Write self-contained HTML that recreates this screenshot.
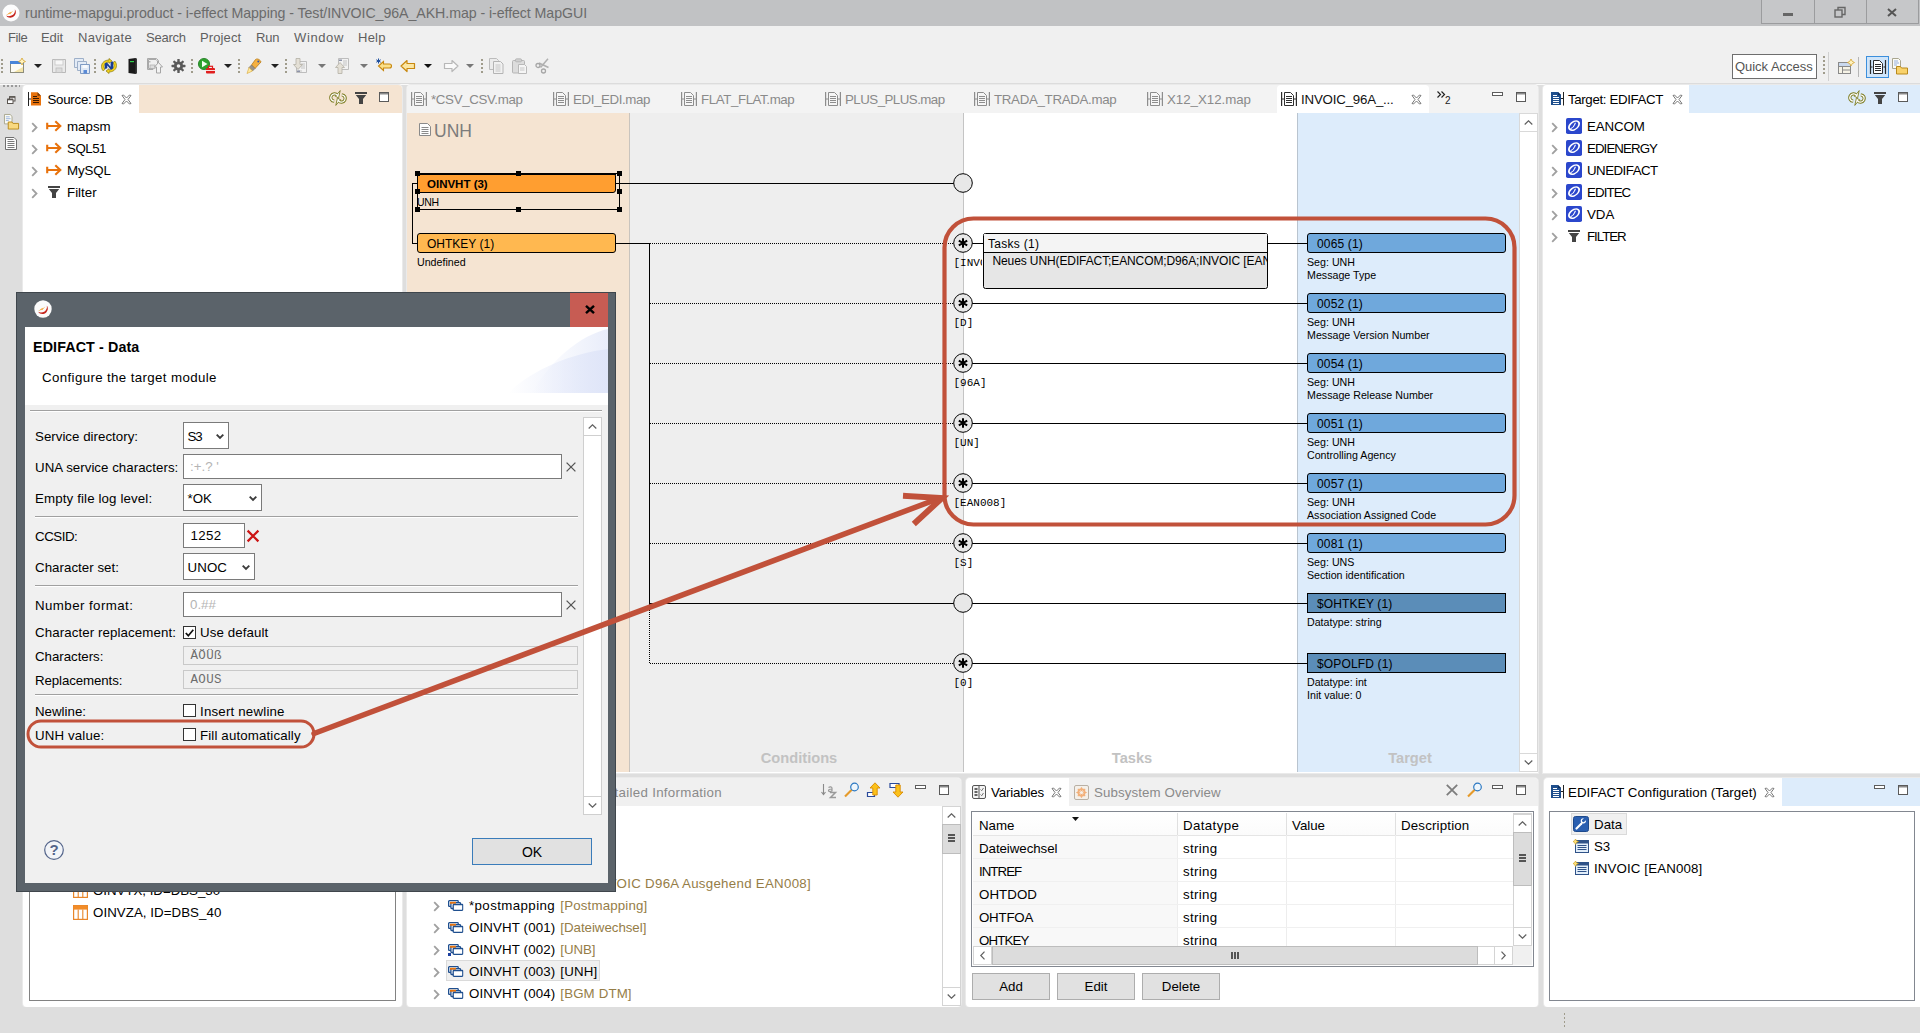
<!DOCTYPE html>
<html lang="en">
<head>
<meta charset="utf-8">
<title>i-effect MapGUI</title>
<style>
*{box-sizing:border-box;margin:0;padding:0}
html,body{width:1920px;height:1033px;overflow:hidden;background:#dedede}
body{font-family:"Liberation Sans",sans-serif;font-size:13px;color:#000;position:relative}
.a{position:absolute}
.t{position:absolute;white-space:nowrap;line-height:16px;height:16px}
.g{color:#6e6e6e}
svg{position:absolute;overflow:visible}
#titlebar{left:0;top:0;width:1920px;height:26px;background:#c1c2c4}
#menubar{left:0;top:26px;width:1920px;height:24px;background:#f0f0f0}
#toolbar{left:0;top:50px;width:1920px;height:35px;background:#f0f0f0}
#status{left:0;top:1007px;width:1920px;height:26px;background:#dedede}
.panel{background:#fff}
.arial{font-family:"Liberation Sans",sans-serif}
</style>
</head>
<body>
<!-- SECTION: titlebar -->
<div class="a" id="titlebar">
<svg style="left:2px;top:4px" width="18" height="18" viewBox="0 0 18 18"><circle cx="9" cy="9" r="8.5" fill="#fdfdfd"/><path d="M4.2 11.5c1.5 2.6 5.5 3 8 .6 2.2-2.2 2-5.2.6-6.6.6 2-.3 4.3-2.2 5.6-2 1.3-4.6 1.4-6.4.4z" fill="#c5241c"/><path d="M4 11.2l4.6-3.4-.2 1 3-2.2-3.6 4 .3-1.200z" fill="#f39a1e"/></svg>
<div class="t" style="letter-spacing:-0.067px;left:25px;top:5px;font-size:14.2px;color:#6b6b6b">runtime-mapgui.product - i-effect Mapping - Test/INVOIC_96A_AKH.map - i-effect MapGUI</div>
<div class="a" style="left:1761px;top:-1px;width:158px;height:25px;border:1px solid #9b9c9e;background:#c6c7c9"></div>
<div class="a" style="left:1814px;top:0;width:1px;height:24px;background:#9b9c9e"></div>
<div class="a" style="left:1866px;top:0;width:1px;height:24px;background:#9b9c9e"></div>
<div class="a" style="left:1783px;top:13px;width:10px;height:3px;background:#666"></div>
<svg style="left:1834px;top:6px" width="12" height="12" viewBox="0 0 12 12" fill="none" stroke="#666" stroke-width="1.4"><rect x="1" y="4" width="7" height="7"/><path d="M4 4V1.500h7v7H8"/></svg>
<svg style="left:1887px;top:8px" width="10" height="9" viewBox="0 0 10 9" fill="none" stroke="#555" stroke-width="2"><path d="M1 1l8 7M9 1L1 8"/></svg>
</div>
<!-- SECTION: menubar -->
<div class="a" id="menubar">
<div class="t g" style="letter-spacing:-0.413px;left:8px;top:3.6px;font-size:13px;color:#5f5f5f">File</div>
<div class="t g" style="letter-spacing:-0.102px;left:41px;top:3.6px;font-size:13px;color:#5f5f5f">Edit</div>
<div class="t g" style="letter-spacing:0.336px;left:78px;top:3.6px;font-size:13px;color:#5f5f5f">Navigate</div>
<div class="t g" style="letter-spacing:-0.251px;left:146px;top:3.6px;font-size:13px;color:#5f5f5f">Search</div>
<div class="t g" style="letter-spacing:0.119px;left:200px;top:3.6px;font-size:13px;color:#5f5f5f">Project</div>
<div class="t g" style="letter-spacing:-0.186px;left:256px;top:3.6px;font-size:13px;color:#5f5f5f">Run</div>
<div class="t g" style="letter-spacing:0.625px;left:294px;top:3.6px;font-size:13px;color:#5f5f5f">Window</div>
<div class="t g" style="letter-spacing:0.237px;left:358px;top:3.6px;font-size:13px;color:#5f5f5f">Help</div>
</div>
<!-- SECTION: toolbar -->
<div class="a" id="toolbar">
<svg style="left:1px;top:8px" width="3" height="17" viewBox="0 0 3 17"><g fill="#a09c8c"><rect x="0" y="1" width="2" height="2"/><rect x="0" y="5" width="2" height="2"/><rect x="0" y="9" width="2" height="2"/><rect x="0" y="13" width="2" height="2"/></g></svg>
<svg style="left:9px;top:8px" width="16" height="16" viewBox="0 0 16 16"><rect x="1.500" y="3.500" width="13" height="11" fill="#fdfcf4" stroke="#8c8c7c"/><rect x="1" y="3" width="14" height="3" fill="#4a86d8"/><path d="M5 14l9-5v5z" fill="#f3e4a8"/><path d="M13 0l1.200 2.300 2.300 1.200-2.300 1.200L13 7l-1.200-2.300L9.500 3.500l2.300-1.200z" fill="#fff3c0" stroke="#d6a531" stroke-width=".8"/></svg>
<svg style="left:34px;top:14px" width="8" height="4" viewBox="0 0 8 4"><path d="M0 0h8L4 4z" fill="#222"/></svg>
<svg style="left:51px;top:8px" width="16" height="16" viewBox="0 0 16 16"><path d="M1.500 1.500h13v13h-13z" fill="#e9e9e9" stroke="#b9b9b9"/><rect x="4" y="2" width="8" height="5" fill="#f7f7f7" stroke="#c5c5c5" stroke-width=".8"/><rect x="5" y="10" width="6" height="4.500" fill="#dcdcdc" stroke="#bdbdbd" stroke-width=".8"/></svg>
<svg style="left:74px;top:8px" width="16" height="16" viewBox="0 0 16 16"><path d="M.5.500h9v9h-9z" fill="#e3ebf6" stroke="#9eb0c9"/><path d="M3.500 3.500h9v9h-9z" fill="#e3ebf6" stroke="#9eb0c9"/><path d="M6.500 6.500h9v9h-9z" fill="#dfe8f5" stroke="#7f9bc4"/><rect x="8.500" y="7" width="5" height="3" fill="#f8fafd"/><rect x="9.500" y="12" width="3.500" height="3.500" fill="#5a8ad6"/></svg>
<svg style="left:94px;top:8px" width="3" height="17" viewBox="0 0 3 17"><g fill="#a09c8c"><rect x="0" y="1" width="2" height="2"/><rect x="0" y="5" width="2" height="2"/><rect x="0" y="9" width="2" height="2"/><rect x="0" y="13" width="2" height="2"/></g></svg>
<svg style="left:101px;top:8px" width="16" height="16" viewBox="0 0 16 16"><path d="M8 .5l3 2.500-3 2.300V4C5 4 3 6 3 8.500c0 1 .3 2 1 2.800l-2 1.500C1 11.500.5 10 .5 8.500.5 4.500 4 2 8 2z" fill="#f2d21e" stroke="#8a7a10" stroke-width=".7"/><path d="M8 15.500l-3-2.500 3-2.300V12c3 0 5-2 5-4.500 0-1-.3-2-1-2.800l2-1.500c1 1.300 1.500 2.800 1.500 4.300 0 4-3.500 6.500-7.500 6.500z" fill="#f2d21e" stroke="#8a7a10" stroke-width=".7"/><path d="M3.800 11V5.300l2.200-.8 3.600 4.300V4.200l2.600-.9v7.200l-2.300 1.200-3.600-4.300v2.800z" fill="#183e96"/></svg>
<svg style="left:127px;top:8px" width="11" height="16" viewBox="0 0 11 16"><path d="M1.500 1l7-1 1.500 1v14l-1.500 1-7-1z" fill="#1a1a1a"/><path d="M8.500 0L10 1v14l-1.500 1z" fill="#3a3a3a"/><rect x="3" y="3" width="4" height="1.200" fill="#2fd04a"/></svg>
<svg style="left:147px;top:8px" width="16" height="16" viewBox="0 0 16 16"><path d="M.5.500h9l2 2V7h-1V3L9 1.500H1.500v9H6v1H.5z" fill="#f4f4f4" stroke="#a9a9a9"/><rect x="2" y="3" width="1.500" height="1.500" fill="#b5b5b5"/><rect x="3" y="7" width="5" height="3.500" fill="#ddd" stroke="#aaa" stroke-width=".7"/><path d="M11.500 4.500l4 4.500h-2v6h-4V9h-2z" fill="#f3f3f3" stroke="#a5a5a5"/></svg>
<svg style="left:171px;top:8px" width="15" height="16" viewBox="0 0 15 16"><g fill="#5a5a5a"><circle cx="7.500" cy="8" r="4.600"/><rect x="6.300" y="1" width="2.400" height="14" rx=".6" transform="rotate(0 7.500 8)"/><rect x="6.300" y="1" width="2.400" height="14" rx=".6" transform="rotate(45 7.500 8)"/><rect x="6.300" y="1" width="2.400" height="14" rx=".6" transform="rotate(90 7.500 8)"/><rect x="6.300" y="1" width="2.400" height="14" rx=".6" transform="rotate(135 7.500 8)"/></g><circle cx="7.500" cy="8" r="1.800" fill="#f0f0f0"/></svg>
<svg style="left:191px;top:8px" width="3" height="17" viewBox="0 0 3 17"><g fill="#a09c8c"><rect x="0" y="1" width="2" height="2"/><rect x="0" y="5" width="2" height="2"/><rect x="0" y="9" width="2" height="2"/><rect x="0" y="13" width="2" height="2"/></g></svg>
<svg style="left:198px;top:8px" width="18" height="16" viewBox="0 0 18 16"><circle cx="6" cy="6" r="5.600" fill="#2ea12e"/><circle cx="6" cy="6" r="5.600" fill="none" stroke="#1d7a1d" stroke-width=".8"/><path d="M4 2.800l5.500 3.200L4 9.200z" fill="#f4fff0"/><rect x="8" y="10" width="9" height="5.500" rx="1" fill="#e01e1e"/><rect x="10.500" y="8.300" width="4" height="2.500" fill="none" stroke="#e01e1e" stroke-width="1.200"/><rect x="8" y="12" width="9" height="1" fill="#fff" opacity=".85"/></svg>
<svg style="left:224px;top:14px" width="8" height="4" viewBox="0 0 8 4"><path d="M0 0h8L4 4z" fill="#222"/></svg>
<svg style="left:238px;top:8px" width="3" height="17" viewBox="0 0 3 17"><g fill="#a09c8c"><rect x="0" y="1" width="2" height="2"/><rect x="0" y="5" width="2" height="2"/><rect x="0" y="9" width="2" height="2"/><rect x="0" y="13" width="2" height="2"/></g></svg>
<svg style="left:246px;top:8px" width="16" height="16" viewBox="0 0 16 16"><path d="M9.500 1.500c2-1.500 5 .5 5.500 2.500L9 10.500 5.500 7z" fill="#f5b041" stroke="#b97a15" stroke-width=".8"/><circle cx="12.300" cy="3.600" r="1" fill="#3556a8"/><path d="M5.500 7L9 10.500 6.500 13 3 9.500z" fill="#9a938a" stroke="#6e6961" stroke-width=".6"/><path d="M3 9.500L6.500 13 1 15.500z" fill="#ffe9a0" stroke="#d6a531" stroke-width=".6"/></svg>
<svg style="left:271px;top:14px" width="8" height="4" viewBox="0 0 8 4"><path d="M0 0h8L4 4z" fill="#222"/></svg>
<svg style="left:285px;top:8px" width="3" height="17" viewBox="0 0 3 17"><g fill="#a09c8c"><rect x="0" y="1" width="2" height="2"/><rect x="0" y="5" width="2" height="2"/><rect x="0" y="9" width="2" height="2"/><rect x="0" y="13" width="2" height="2"/></g></svg>
<svg style="left:293px;top:8px" width="15" height="16" viewBox="0 0 15 16"><path d="M3.500 3.500h10v11h-10z" fill="#f2f2f2" stroke="#bdbdbd"/><path d="M8 6h4M8 8h4M8 10h4M5 13h4" stroke="#c4c4c4"/><rect x="4" y="12.500" width="3" height="1.500" fill="#8d93a8"/><path d="M3 .5h4v6h2.500L5 11.500.5 6.500H3z" fill="#e4e0d6" stroke="#b4b0a6" stroke-width=".8"/></svg>
<svg style="left:318px;top:14px" width="8" height="4" viewBox="0 0 8 4"><path d="M0 0h8L4 4z" fill="#777"/></svg>
<svg style="left:335px;top:8px" width="15" height="16" viewBox="0 0 15 16"><path d="M3.500.500h10v11h-10z" fill="#f2f2f2" stroke="#bdbdbd"/><path d="M8 3h4M8 5h4M8 7h4" stroke="#c4c4c4"/><rect x="4" y="1.500" width="3" height="1.500" fill="#8d93a8"/><path d="M3 15.500h4v-6h2.500L5 4.500.5 9.500H3z" fill="#e4e0d6" stroke="#b4b0a6" stroke-width=".8"/></svg>
<svg style="left:360px;top:14px" width="8" height="4" viewBox="0 0 8 4"><path d="M0 0h8L4 4z" fill="#777"/></svg>
<svg style="left:376px;top:8px" width="17" height="16" viewBox="0 0 17 16"><path d="M7.500 3.500L2.500 8l5 4.500V10h6c1.500 0 2-1 2-2s-.5-2-2-2h-6z" fill="#fbe08a" stroke="#c8880f" stroke-width="1.100"/><path d="M2.500.5v5M.3 1.800l4.400 2.400M4.700 1.800L.3 4.200" stroke="#1d4e9e" stroke-width="1"/></svg>
<svg style="left:400px;top:8px" width="16" height="16" viewBox="0 0 16 16"><path d="M7 2.500L1 8l6 5.500V10.500h7.500v-5H7z" fill="#fbe6a2" stroke="#c8880f" stroke-width="1.200" stroke-linejoin="round"/></svg>
<svg style="left:424px;top:14px" width="8" height="4" viewBox="0 0 8 4"><path d="M0 0h8L4 4z" fill="#111"/></svg>
<svg style="left:443px;top:8px" width="16" height="16" viewBox="0 0 16 16"><path d="M9 2.500L15 8l-6 5.500V10.500H1.500v-5H9z" fill="#fafafa" stroke="#b7b7b7" stroke-width="1.200" stroke-linejoin="round"/></svg>
<svg style="left:466px;top:14px" width="8" height="4" viewBox="0 0 8 4"><path d="M0 0h8L4 4z" fill="#777"/></svg>
<svg style="left:481px;top:8px" width="3" height="17" viewBox="0 0 3 17"><g fill="#a09c8c"><rect x="0" y="1" width="2" height="2"/><rect x="0" y="5" width="2" height="2"/><rect x="0" y="9" width="2" height="2"/><rect x="0" y="13" width="2" height="2"/></g></svg>
<svg style="left:489px;top:8px" width="15" height="16" viewBox="0 0 15 16"><path d="M.5.500h7l2 2v9h-9z" fill="#ececec" stroke="#bcbcbc"/><path d="M4.500 3.500h7l2.500 2.500v9.500h-9.500z" fill="#f1f1f1" stroke="#b4b4b4"/><path d="M6.500 7h5M6.500 9h5M6.500 11h5M6.500 13h5" stroke="#c6c6c6"/></svg>
<svg style="left:512px;top:8px" width="15" height="16" viewBox="0 0 15 16"><rect x=".5" y="2.500" width="12" height="12.500" rx="1" fill="#dcdcdc" stroke="#b5b5b5"/><rect x="3.500" y=".8" width="6" height="3" rx="1" fill="#cfcfcf" stroke="#b0b0b0" stroke-width=".8"/><path d="M6.500 6.500h6l2 2v7h-8z" fill="#f5f5f5" stroke="#b9b9b9"/><path d="M8 10h4.500M8 12h4.500" stroke="#c6c6c6"/></svg>
<svg style="left:535px;top:8px" width="15" height="16" viewBox="0 0 15 16"><path d="M13 .8L5.500 9.500M4 5l9.500 4.500" stroke="#b0b0b0" stroke-width="1.500" fill="none"/><circle cx="3" cy="7.500" r="2" fill="none" stroke="#a6a6a6" stroke-width="1.300"/><circle cx="8.500" cy="13" r="2" fill="none" stroke="#a6a6a6" stroke-width="1.300"/></svg>
<div class="a" style="left:1732px;top:4px;width:85px;height:25px;border:1px solid #6e6e6e;background:#fff"></div>
<div class="t" style="letter-spacing:-0.036px;left:1735px;top:9px;font-size:13px;color:#555">Quick Access</div>
<svg style="left:1823px;top:5px" width="3" height="22" viewBox="0 0 3 22"><g fill="#a09c8c"><rect y="1" width="2" height="2"/><rect y="5" width="2" height="2"/><rect y="9" width="2" height="2"/><rect y="13" width="2" height="2"/><rect y="17" width="2" height="2"/></g></svg>
<div class="a" style="left:1828px;top:2px;width:1px;height:29px;background:#d0d0d0"></div>
<svg style="left:1838px;top:9px" width="17" height="16" viewBox="0 0 17 16"><rect x=".5" y="3.500" width="12" height="11" fill="#f6f3e6" stroke="#8a8a8a"/><path d="M.5 7.500h12M4.500 7.500v7M4.500 11h8" stroke="#8a8a8a"/><rect x="1" y="4" width="11" height="3" fill="#c9d8ee"/><path d="M13 0l1.200 2.300 2.300 1.200-2.300 1.200L13 7l-1.200-2.300L9.500 3.500l2.300-1.200z" fill="#fff3c0" stroke="#d6a531" stroke-width=".8"/></svg>
<div class="a" style="left:1858px;top:7px;width:1px;height:20px;background:#b5b5b5"></div>
<div class="a" style="left:1866px;top:6px;width:23px;height:22px;border:1px solid #3c8fdc;background:#cfe5fa"></div>
<svg style="left:1870px;top:10px" width="16" height="14" viewBox="0 0 16 14" fill="none" stroke="#2b2b2b"><path d="M.5 0v14M15.500 0v14M.5 7h2M13.500 7h2" stroke-width="1.200"/><path d="M3.500.500h6l3 3v10h-9z" fill="#fff"/><path d="M5 4.500h6M5 6.500h6M5 8.500h6M5 10.500h6" stroke-width="1"/></svg>
<svg style="left:1892px;top:8px" width="17" height="17" viewBox="0 0 17 17"><path d="M.5.500h6l2 2v8h-8z" fill="#fbfbf5" stroke="#a9a68f"/><path d="M2 3h4M2 5h5M2 7h3" stroke="#7fa0d8" stroke-width=".8"/><path d="M4.500 8.500h4l1 1.500h6v6h-11z" fill="#f9d26a" stroke="#b98a1c"/></svg>
<div class="a" style="left:0;top:33px;width:1920px;height:1px;background:#dcdcdc"></div><div class="a" style="left:0;top:34px;width:1920px;height:1px;background:#fafafa"></div>
</div>
<!-- SECTION: lefttrim -->
<svg width="0" height="0" style="left:-10px;top:-10px"><defs>
<symbol id="chev" viewBox="0 0 7 11"><path d="M1.200 1.200L5.500 5.500 1.200 9.800" fill="none" stroke="#a0a0a0" stroke-width="1.800"/></symbol>
<symbol id="rarrow" viewBox="0 0 16 12"><path d="M1.200 2.800v6.400M1 6h13M9.300 1.300L14.300 6l-5 4.700" fill="none" stroke="#e8720c" stroke-width="2.100"/></symbol>
<symbol id="funnel" viewBox="0 0 12 12"><path d="M0 0h12v2H0zM.8 3h10.400L8 7v5H4V7z" fill="#444"/></symbol>
<symbol id="closex" viewBox="0 0 11 11"><path d="M1 1.500L2.500 1 5.500 4 8.500 1 10 1.500 7 5.500 10 9.500 8.500 10 5.500 7 2.500 10 1 9.500 4 5.500z" fill="#fff" stroke="#6a6a6a" stroke-width=".9" stroke-linejoin="round"/></symbol>
<symbol id="maxi" viewBox="0 0 10 10"><rect x=".5" y=".5" width="9" height="9" fill="#fff" stroke="#5a5a5a"/><rect x="1" y="1" width="8" height="1.500" fill="#8a8a8a"/></symbol>
<symbol id="mini" viewBox="0 0 11 4"><rect x=".5" y=".5" width="10" height="3" fill="#fff" stroke="#5d5d5d"/></symbol>
<symbol id="syncg" viewBox="0 0 18 16"><path d="M8.500 5.200C6.800 3.200 3.600 3.400 2.300 5.800 1 8.300 2.500 11 5.200 11.200" fill="none" stroke="#7d7d23" stroke-width="3.200"/><path d="M9.500 10.800C11.200 12.800 14.400 12.600 15.700 10.200 17 7.700 15.500 5 12.800 4.800" fill="none" stroke="#7d7d23" stroke-width="3.200"/><path d="M11.200 .6L6.400 6.400 8.600 7.200 6.800 15.400 11.600 9.600 9.400 8.800z" fill="#fff" stroke="#7d7d23" stroke-width=".9" stroke-linejoin="round"/><path d="M8.500 5.200C6.800 3.200 3.600 3.400 2.300 5.800 1 8.300 2.500 11 5.200 11.200" fill="none" stroke="#fff" stroke-width="1.300"/><path d="M9.500 10.800C11.200 12.800 14.400 12.600 15.700 10.200 17 7.700 15.500 5 12.800 4.800" fill="none" stroke="#fff" stroke-width="1.300"/></symbol>
<symbol id="mapi" viewBox="0 0 16 14"><g fill="none" stroke="#8d8d8d"><path d="M.6 0v14M15.400 0v14M.6 7h2.400M13 7h2.400" stroke-width="1.200"/><path d="M3.500.500h6l3 3v10h-9z" fill="#f6f6f6"/><path d="M5 4.500h6M5 6.500h6M5 8.500h6M5 10.500h6"/></g></symbol>
<symbol id="mapib" viewBox="0 0 16 14"><g fill="none" stroke="#2f2f2f"><path d="M.6 0v14M15.400 0v14M.6 7h2.400M13 7h2.400" stroke-width="1.200"/><path d="M3.500.500h6l3 3v10h-9z" fill="#fff"/><path d="M5 4.500h6M5 6.500h6M5 8.500h6M5 10.500h6"/></g></symbol>
<symbol id="chk" viewBox="0 0 16 16"><rect x="0" y="0" width="16" height="16" rx="1.800" fill="#2b47cc"/><path fill-rule="evenodd" fill="#fff" d="M2.200 10.600C1.400 8 4 4.300 7.500 2.800c3-1.300 5.800-.5 6.400 1.800.7 2.600-1.500 6.200-5.200 7.800-3 1.300-5.800.6-6.500-1.800zM4 10.100c.5 1.500 2.300 1.800 4.300.9 2.700-1.200 4.400-3.900 3.900-5.800-.4-1.500-2.200-1.900-4.200-1-2.700 1.200-4.600 4-4 5.900z"/><path d="M4.600 10.800c1.800-.8 3.600-2.600 4.600-5.200" fill="none" stroke="#fff" stroke-width="1.100"/><path d="M8 5.300l1.500-.9.500 1.700z" fill="#fff"/></symbol>
<symbol id="star" viewBox="0 0 20 20"><circle cx="10" cy="10" r="9.300" fill="#e8e8e8" stroke="#000" stroke-width="1"/><path d="M10 5.200v9.600M5.800 7.600l8.400 4.800M14.200 7.600l-8.400 4.800" stroke="#000" stroke-width="2"/></symbol>
<symbol id="circ" viewBox="0 0 20 20"><circle cx="10" cy="10" r="9.300" fill="#e8e8e8" stroke="#000" stroke-width="1"/></symbol>
<symbol id="stk" viewBox="0 0 15.500 11"><rect x=".65" y=".65" width="9.600" height="5.800" rx=".8" fill="#fff" stroke="#1f4f8f" stroke-width="1.300"/><rect x="2" y="1.900" width="6" height="1.800" fill="#e8720c"/><rect x="2.900" y="2.700" width="9.600" height="5.800" rx=".8" fill="#fff" stroke="#1f4f8f" stroke-width="1.300"/><rect x="2" y="1.900" width="6" height="1.800" fill="#e8720c"/><rect x="5.200" y="4.500" width="9.600" height="5.800" rx=".8" fill="#fff" stroke="#1f4f8f" stroke-width="1.300"/></symbol>
<symbol id="tbl" viewBox="0 0 15 15"><rect x=".6" y=".6" width="13.800" height="13.800" fill="#fff" stroke="#e8862a" stroke-width="1.200"/><rect x=".6" y=".6" width="13.800" height="4" fill="#f28c28"/><path d="M5.200 4.500v10M9.800 4.500v10" stroke="#e8862a" stroke-width="1.100"/></symbol>
<symbol id="sbup" viewBox="0 0 9 5"><path d="M.7 4.500L4.500 .8 8.300 4.500" fill="none" stroke="#606060" stroke-width="1.200"/></symbol>
<symbol id="sbdn" viewBox="0 0 9 5"><path d="M.7 .5L4.500 4.200 8.300 .5" fill="none" stroke="#606060" stroke-width="1.200"/></symbol>
</defs></svg>
<div class="a" style="left:0;top:85px;width:23px;height:948px;background:#dedede"></div>
<div class="a" style="left:3px;top:85px;width:17px;height:2px;background:repeating-linear-gradient(90deg,#9a9a9a 0 2px,transparent 2px 4px)"></div>
<svg style="left:7px;top:96px" width="8.500" height="8" viewBox="0 0 8.500 8" fill="#fff" stroke="#5a5550" stroke-width="1"><rect x="2.500" y=".7" width="5.500" height="4.300"/><path d="M2.500 1h5.500" stroke-width="1.600"/><rect x=".5" y="3.200" width="5.500" height="4.300"/><path d="M.5 3.500h5.500" stroke-width="1.600"/></svg>
<svg style="left:4px;top:114px" width="16" height="16" viewBox="0 0 17 17"><path d="M.5.500h6l2 2v8h-8z" fill="#fbfbf5" stroke="#a9a68f"/><path d="M2 3h4M2 5h5M2 7h3" stroke="#7fa0d8" stroke-width=".8"/><path d="M4.500 8.500h4l1 1.500h6v6h-11z" fill="#f9d980" stroke="#b98a1c"/></svg>
<svg style="left:5px;top:137px" width="12" height="13" viewBox="0 0 12 13"><path d="M.5.500h8.500l2.500 2.500v9.500H.5z" fill="#fdfdfd" stroke="#6f6f6f"/><path d="M2.500 2.500h6M2.500 4.500h7M2.500 6.500h7M2.500 8.500h7M2.500 10.500h7" stroke="#7a7a7a" stroke-width="1"/></svg>

<!-- SECTION: source -->
<div class="a" style="left:23px;top:85px;width:378.500px;height:921.500px;background:#fff;border-radius:4px;box-shadow:0 0 0 1px #eaeaea;"></div>
<div class="a" style="left:139px;top:85px;width:262.5px;height:28px;background:#f5e4d2;border-radius:0 4px 0 0"></div>
<svg style="left:28px;top:92px" width="14" height="14" viewBox="0 0 14 14"><path d="M.5 0v14M.5 7h2.500" stroke="#222" stroke-width="1"/><path d="M3 .3h6.500L13 3.800v9.700H3z" fill="#e8720c"/><path d="M9.500.300v3.500H13z" fill="#7a3a05"/><path d="M5 4.500h4M5 6.500h6M5 8.500h6M5 10.500h6" stroke="#3a1a00" stroke-width="1"/></svg>
<div class="t" style="letter-spacing:-0.270px;left:47.500px;top:92px;font-size:13.300px">Source: DB</div>
<svg style="left:121px;top:94px" width="11" height="11"><use href="#closex"/></svg>
<svg style="left:329px;top:90px" width="18" height="16"><use href="#syncg"/></svg>
<svg style="left:355px;top:92px" width="12" height="12"><use href="#funnel"/></svg>
<svg style="left:379px;top:92px" width="10" height="10"><use href="#maxi"/></svg>
<svg style="left:31px;top:121.5px" width="7" height="11"><use href="#chev"/></svg><svg style="left:46px;top:120px" width="16" height="12"><use href="#rarrow"/></svg><div class="t" style="letter-spacing:0.021px;left:67px;top:118.6px;font-size:13.300px">mapsm</div>
<svg style="left:31px;top:143.5px" width="7" height="11"><use href="#chev"/></svg><svg style="left:46px;top:142px" width="16" height="12"><use href="#rarrow"/></svg><div class="t" style="letter-spacing:-0.481px;left:67px;top:140.6px;font-size:13.300px">SQL51</div>
<svg style="left:31px;top:165.5px" width="7" height="11"><use href="#chev"/></svg><svg style="left:46px;top:164px" width="16" height="12"><use href="#rarrow"/></svg><div class="t" style="letter-spacing:-0.129px;left:67px;top:162.6px;font-size:13.300px">MySQL</div>
<svg style="left:31px;top:187.5px" width="7" height="11"><use href="#chev"/></svg><svg style="left:48px;top:186px" width="12" height="12"><use href="#funnel"/></svg><div class="t" style="letter-spacing:0.006px;left:67px;top:184.6px;font-size:13.300px">Filter</div>
<div class="a" style="left:29px;top:560px;width:367px;height:441px;border:1px solid #828282;background:#fff"></div>
<svg style="left:73px;top:883px" width="15" height="15"><use href="#tbl"/></svg><div class="t" style="letter-spacing:-0.028px;left:93px;top:882.6px;font-size:13.300px">OINVTX, ID=DBS_30</div>
<svg style="left:73px;top:905px" width="15" height="15"><use href="#tbl"/></svg><div class="t" style="letter-spacing:0.054px;left:93px;top:904.6px;font-size:13.300px">OINVZA, ID=DBS_40</div>

<!-- SECTION: editor -->
<div class="a" style="left:407px;top:85px;width:1131px;height:688px;background:#fff;border-radius:4px 4px 0 0;box-shadow:0 0 0 1px #eaeaea;"></div>
<div class="a" style="left:407px;top:85px;width:1131px;height:28px;background:#f3f3f3;border-radius:4px 4px 0 0"></div>
<div class="a" style="left:1277px;top:85px;width:152px;height:29px;background:#fff;border-radius:4px 4px 0 0"></div>
<svg style="left:411px;top:92px" width="16" height="14"><use href="#mapi"/></svg><div class="t" style="letter-spacing:-0.333px;left:431px;top:92px;font-size:13.300px;color:#8a8a8a">*CSV_CSV.map</div>
<svg style="left:553px;top:92px" width="16" height="14"><use href="#mapi"/></svg><div class="t" style="letter-spacing:-0.391px;left:573px;top:92px;font-size:13.300px;color:#8a8a8a">EDI_EDI.map</div>
<svg style="left:681px;top:92px" width="16" height="14"><use href="#mapi"/></svg><div class="t" style="letter-spacing:-0.402px;left:701px;top:92px;font-size:13.300px;color:#8a8a8a">FLAT_FLAT.map</div>
<svg style="left:825px;top:92px" width="16" height="14"><use href="#mapi"/></svg><div class="t" style="letter-spacing:-0.526px;left:845px;top:92px;font-size:13.300px;color:#8a8a8a">PLUS_PLUS.map</div>
<svg style="left:974px;top:92px" width="16" height="14"><use href="#mapi"/></svg><div class="t" style="letter-spacing:-0.313px;left:994px;top:92px;font-size:13.300px;color:#8a8a8a">TRADA_TRADA.map</div>
<svg style="left:1147px;top:92px" width="16" height="14"><use href="#mapi"/></svg><div class="t" style="letter-spacing:-0.026px;left:1167px;top:92px;font-size:13.300px;color:#8a8a8a">X12_X12.map</div>
<svg style="left:1281px;top:92px" width="16" height="14"><use href="#mapib"/></svg><div class="t" style="letter-spacing:-0.196px;left:1301px;top:92px;font-size:13.300px;color:#111">INVOIC_96A_...</div>
<svg style="left:1411px;top:94px" width="11" height="11"><use href="#closex"/></svg>
<svg style="left:1437px;top:91px" width="8" height="7" viewBox="0 0 8 7" fill="none" stroke="#222" stroke-width="1.200"><path d="M.5.500l3 3-3 3M4.500.500l3 3-3 3"/></svg><div class="t" style="left:1445px;top:93px;font-size:10px;color:#222">2</div>
<svg style="left:1492px;top:92px" width="11" height="4"><use href="#mini"/></svg>
<svg style="left:1516px;top:92px" width="10" height="10"><use href="#maxi"/></svg>
<div class="a" style="left:407px;top:113px;width:223px;height:659px;background:#f5e4d2;border-right:1px solid #c9c4be"></div>
<div class="a" style="left:630px;top:113px;width:334px;height:659px;background:#eeeeee;border-right:1px solid #c4c4c4"></div>
<div class="a" style="left:1297px;top:113px;width:222px;height:659px;background:#ddecfb;border-left:1px solid #b9c4cf"></div>
<div class="a" style="left:1519px;top:113px;width:19px;height:659px;background:#fff;border-left:1px solid #d9d9d9;border-right:1px solid #d9d9d9"></div>
<div class="a" style="left:1519px;top:113px;width:19px;height:19px;border:1px solid #d9d9d9;background:#fff"></div><svg style="left:1524px;top:120px" width="9" height="5"><use href="#sbup"/></svg>
<div class="a" style="left:1519px;top:753px;width:19px;height:19px;border:1px solid #d9d9d9;background:#fff"></div><svg style="left:1524px;top:760px" width="9" height="5"><use href="#sbdn"/></svg>
<svg style="left:419px;top:123px" width="12" height="13" viewBox="0 0 12 13"><path d="M.5.500h8l3 3v9h-11z" fill="#fdfdfd" stroke="#8a8a8a"/><path d="M2.500 4.500h7M2.500 6.500h7M2.500 8.500h7M2.500 10.500h7" stroke="#8a8a8a" stroke-width="1"/></svg>
<div class="t" style="left:434px;top:121px;font-size:17.500px;line-height:20px;height:20px;color:#7c7c7c">UNH</div>
<div class="t" style="left:739px;width:120px;text-align:center;top:749px;font-size:14.670px;line-height:18px;height:18px;font-weight:bold;color:#c2c2c2">Conditions</div>
<div class="t" style="left:1072px;width:120px;text-align:center;top:749px;font-size:14.670px;line-height:18px;height:18px;font-weight:bold;color:#c2c2c2">Tasks</div>
<div class="t" style="left:1350px;width:120px;text-align:center;top:749px;font-size:14.670px;line-height:18px;height:18px;font-weight:bold;color:#c2c2c2">Target</div>
<svg style="left:0;top:0" width="1920" height="1033" viewBox="0 0 1920 1033" shape-rendering="crispEdges">
<g stroke="#000" stroke-width="1" fill="none">
<path d="M417.500 183.500H412.500V243.500H417.500"/>
<path d="M616 183.500H954"/>
<path d="M616 243.500H649.500V603.500"/>
<path d="M649.500 603.500H954"/>
<path d="M650 243.5H954" stroke-dasharray="1 1"/>
<path d="M650 303.5H954" stroke-dasharray="1 1"/>
<path d="M650 363.5H954" stroke-dasharray="1 1"/>
<path d="M650 423.5H954" stroke-dasharray="1 1"/>
<path d="M650 483.5H954" stroke-dasharray="1 1"/>
<path d="M650 543.5H954" stroke-dasharray="1 1"/>
<path d="M650 663.5H954" stroke-dasharray="1 1"/>
<path d="M649.500 604V663" stroke-dasharray="1 1"/>
<path d="M972 243.500H983"/><path d="M1267 243.500H1307"/>
<path d="M972 303.5H1307"/>
<path d="M972 363.5H1307"/>
<path d="M972 423.5H1307"/>
<path d="M972 483.5H1307"/>
<path d="M972 543.5H1307"/>
<path d="M972 603.5H1307"/>
<path d="M972 663.5H1307"/>
</g>
<rect x="417.500" y="173.500" width="202" height="36" fill="none" stroke="#000"/>
<rect x="417.500" y="173.500" width="198" height="19" rx="2.500" fill="#ff9e30" stroke="#000" shape-rendering="auto"/>
<rect x="417.500" y="173" width="198" height="1.500" fill="#000"/>
<rect x="417.500" y="233.500" width="198" height="19" rx="2.500" fill="#ffb850" stroke="#000" shape-rendering="auto"/>
<rect x="415" y="171" width="5" height="5" fill="#000"/>
<rect x="415" y="189" width="5" height="5" fill="#000"/>
<rect x="415" y="207" width="5" height="5" fill="#000"/>
<rect x="516" y="171" width="5" height="5" fill="#000"/>
<rect x="516" y="207" width="5" height="5" fill="#000"/>
<rect x="617" y="171" width="5" height="5" fill="#000"/>
<rect x="617" y="189" width="5" height="5" fill="#000"/>
<rect x="617" y="207" width="5" height="5" fill="#000"/>
<rect x="983.500" y="233.500" width="284" height="55" rx="2" fill="#e6e6e6" stroke="#000" shape-rendering="auto"/>
<path d="M984 234h283v18h-283z" fill="#f4f4f4"/><path d="M984 252.500h283" stroke="#000"/>
<rect x="1307.500" y="233.5" width="198" height="19" rx="2.500" fill="#6fa8dc" stroke="#000" shape-rendering="auto"/>
<rect x="1307.500" y="293.5" width="198" height="19" rx="2.500" fill="#6fa8dc" stroke="#000" shape-rendering="auto"/>
<rect x="1307.500" y="353.5" width="198" height="19" rx="2.500" fill="#6fa8dc" stroke="#000" shape-rendering="auto"/>
<rect x="1307.500" y="413.5" width="198" height="19" rx="2.500" fill="#6fa8dc" stroke="#000" shape-rendering="auto"/>
<rect x="1307.500" y="473.5" width="198" height="19" rx="2.500" fill="#6fa8dc" stroke="#000" shape-rendering="auto"/>
<rect x="1307.500" y="533.5" width="198" height="19" rx="2.500" fill="#6fa8dc" stroke="#000" shape-rendering="auto"/>
<rect x="1307.500" y="593.5" width="198" height="19" fill="#5b8db8" stroke="#000"/>
<rect x="1307.500" y="653.5" width="198" height="19" fill="#5b8db8" stroke="#000"/>
</svg>
<svg style="left:953px;top:233px" width="20" height="20"><use href="#star"/></svg>
<svg style="left:953px;top:293px" width="20" height="20"><use href="#star"/></svg>
<svg style="left:953px;top:353px" width="20" height="20"><use href="#star"/></svg>
<svg style="left:953px;top:413px" width="20" height="20"><use href="#star"/></svg>
<svg style="left:953px;top:473px" width="20" height="20"><use href="#star"/></svg>
<svg style="left:953px;top:533px" width="20" height="20"><use href="#star"/></svg>
<svg style="left:953px;top:653px" width="20" height="20"><use href="#star"/></svg>
<svg style="left:953px;top:173px" width="20" height="20"><use href="#circ"/></svg>
<svg style="left:953px;top:593px" width="20" height="20"><use href="#circ"/></svg>
<div class="t" style="left:427px;top:176px;font-size:11.500px;font-weight:bold">OINVHT (3)</div>
<div class="t" style="left:417px;top:194px;font-size:10.500px;letter-spacing:-.3px">UNH</div>
<div class="t" style="left:427px;top:236px;font-size:12px">OHTKEY (1)</div>
<div class="t" style="left:417px;top:254px;font-size:10.670px">Undefined</div>
<div class="t" style="left:988px;top:236px;font-size:12px;letter-spacing:.3px">Tasks (1)</div>
<div class="a" style="left:984px;top:253px;width:283px;height:16px;overflow:hidden"><div class="t" style="left:8.500px;top:0px;font-size:12px"><span style="letter-spacing:-0.108px">Neues UNH(EDIFACT;EANCOM;D96A;INVOIC</span> <span style="letter-spacing:-.08px">[EAN008])</span></div></div>
<div class="t" style="left:1317px;top:236px;font-size:12px;letter-spacing:.15px">0065 (1)</div><div class="t" style="left:1307px;top:254px;font-size:10.670px">Seg: UNH</div><div class="t" style="left:1307px;top:267px;font-size:10.670px">Message Type</div>
<div class="t" style="left:1317px;top:296px;font-size:12px;letter-spacing:.15px">0052 (1)</div><div class="t" style="left:1307px;top:314px;font-size:10.670px">Seg: UNH</div><div class="t" style="left:1307px;top:327px;font-size:10.670px">Message Version Number</div>
<div class="t" style="left:1317px;top:356px;font-size:12px;letter-spacing:.15px">0054 (1)</div><div class="t" style="left:1307px;top:374px;font-size:10.670px">Seg: UNH</div><div class="t" style="left:1307px;top:387px;font-size:10.670px">Message Release Number</div>
<div class="t" style="left:1317px;top:416px;font-size:12px;letter-spacing:.15px">0051 (1)</div><div class="t" style="left:1307px;top:434px;font-size:10.670px">Seg: UNH</div><div class="t" style="left:1307px;top:447px;font-size:10.670px">Controlling Agency</div>
<div class="t" style="left:1317px;top:476px;font-size:12px;letter-spacing:.15px">0057 (1)</div><div class="t" style="left:1307px;top:494px;font-size:10.670px">Seg: UNH</div><div class="t" style="left:1307px;top:507px;font-size:10.670px">Association Assigned Code</div>
<div class="t" style="left:1317px;top:536px;font-size:12px;letter-spacing:.15px">0081 (1)</div><div class="t" style="left:1307px;top:554px;font-size:10.670px">Seg: UNS</div><div class="t" style="left:1307px;top:567px;font-size:10.670px">Section identification</div>
<div class="t" style="left:1317px;top:596px;font-size:12px;letter-spacing:.15px">$OHTKEY (1)</div><div class="t" style="left:1307px;top:614px;font-size:10.670px">Datatype: string</div>
<div class="t" style="left:1317px;top:656px;font-size:12px;letter-spacing:.15px">$OPOLFD (1)</div><div class="t" style="left:1307px;top:674px;font-size:10.670px">Datatype: int</div><div class="t" style="left:1307px;top:687px;font-size:10.670px">Init value: 0</div>
<div class="t" style="left:953.500px;top:255px;width:28px;overflow:hidden;font-family:'Liberation Mono',monospace;font-size:11px">[INVOIC]</div>
<div class="t" style="left:953.500px;top:315px;font-family:'Liberation Mono',monospace;font-size:11px">[D]</div>
<div class="t" style="left:953.500px;top:375px;font-family:'Liberation Mono',monospace;font-size:11px">[96A]</div>
<div class="t" style="left:953.500px;top:435px;font-family:'Liberation Mono',monospace;font-size:11px">[UN]</div>
<div class="t" style="left:953.500px;top:495px;font-family:'Liberation Mono',monospace;font-size:11px">[EAN008]</div>
<div class="t" style="left:953.500px;top:555px;font-family:'Liberation Mono',monospace;font-size:11px">[S]</div>
<div class="t" style="left:953.500px;top:675px;font-family:'Liberation Mono',monospace;font-size:11px">[0]</div>
<!-- SECTION: target -->
<div class="a" style="left:1543px;top:85px;width:378px;height:688px;background:#fff;border-radius:4px 0 0 0;box-shadow:0 0 0 1px #eaeaea;"></div>
<div class="a" style="left:1689px;top:85px;width:231px;height:28px;background:#ddecfb"></div>
<svg style="left:1551px;top:92px" width="14" height="14" viewBox="0 0 14 14"><path d="M0 0h7l3 3v10H0z" fill="#1e4e8c"/><path d="M7 0v3h3z" fill="#0e2e5c"/><path d="M2 3.500h4M2 5.500h6M2 7.500h6M2 9.500h6M2 11.500h6" stroke="#fff" stroke-width="1"/><path d="M12.500 0v13.500M10 6.500h2.500" stroke="#222" stroke-width="1" fill="none"/></svg>
<div class="t" style="letter-spacing:-0.367px;left:1568px;top:92px;font-size:13.300px">Target: EDIFACT</div>
<svg style="left:1672px;top:94px" width="11" height="11"><use href="#closex"/></svg>
<svg style="left:1848px;top:90px" width="18" height="16"><use href="#syncg"/></svg>
<svg style="left:1874px;top:92px" width="12" height="12"><use href="#funnel"/></svg>
<svg style="left:1898px;top:92px" width="10" height="10"><use href="#maxi"/></svg>
<svg style="left:1551px;top:121.5px" width="7" height="11"><use href="#chev"/></svg>
<svg style="left:1566px;top:118px" width="16" height="16"><use href="#chk"/></svg>
<div class="t" style="letter-spacing:-0.112px;left:1587px;top:118.6px;font-size:13.300px">EANCOM</div>
<svg style="left:1551px;top:143.5px" width="7" height="11"><use href="#chev"/></svg>
<svg style="left:1566px;top:140px" width="16" height="16"><use href="#chk"/></svg>
<div class="t" style="letter-spacing:-0.925px;left:1587px;top:140.6px;font-size:13.300px">EDIENERGY</div>
<svg style="left:1551px;top:165.5px" width="7" height="11"><use href="#chev"/></svg>
<svg style="left:1566px;top:162px" width="16" height="16"><use href="#chk"/></svg>
<div class="t" style="letter-spacing:-0.518px;left:1587px;top:162.6px;font-size:13.300px">UNEDIFACT</div>
<svg style="left:1551px;top:187.5px" width="7" height="11"><use href="#chev"/></svg>
<svg style="left:1566px;top:184px" width="16" height="16"><use href="#chk"/></svg>
<div class="t" style="letter-spacing:-0.911px;left:1587px;top:184.6px;font-size:13.300px">EDITEC</div>
<svg style="left:1551px;top:209.5px" width="7" height="11"><use href="#chev"/></svg>
<svg style="left:1566px;top:206px" width="16" height="16"><use href="#chk"/></svg>
<div class="t" style="letter-spacing:-0.015px;left:1587px;top:206.6px;font-size:13.300px">VDA</div>
<svg style="left:1551px;top:231.5px" width="7" height="11"><use href="#chev"/></svg>
<svg style="left:1568px;top:230px" width="12" height="12"><use href="#funnel"/></svg>
<div class="t" style="letter-spacing:-1.021px;left:1587px;top:228.6px;font-size:13.300px">FILTER</div>
<!-- SECTION: bottom1 -->
<div class="a" style="left:406.500px;top:778px;width:554.500px;height:228.500px;background:#fff;border-radius:4px;box-shadow:0 0 0 1px #eaeaea;"></div>
<div class="a" style="left:406.500px;top:778px;width:554.500px;height:28px;background:#f0f0f0;border-radius:4px 4px 0 0"></div>
<div class="t" style="right:1198px;top:784.600px;font-size:13.300px;color:#8a8a8a">Outline - De<span style="letter-spacing:0.3px">tailed Information</span></div>
<svg style="left:821px;top:783px" width="16" height="16" viewBox="0 0 16 16"><path d="M2.500 1v10M.5 9l2 2.500L4.500 9" fill="none" stroke="#8a8a8a" stroke-width="1.100"/><path d="M7.500 4.500c1.500-1 3.500-.8 3.500.8V8.500M11 6c-2 0-3.500.3-3.500 1.500S9.500 9 11 7.800" fill="none" stroke="#9a9a9a" stroke-width="1.200"/><path d="M9 9.500h5.500L9.500 14.500H15" fill="none" stroke="#9a9a9a" stroke-width="1.500"/></svg>
<svg style="left:844px;top:782px" width="16" height="16" viewBox="0 0 16 16"><path d="M1 14.500L8 7.500" stroke="#e59a2a" stroke-width="2.200"/><circle cx="10.500" cy="5" r="3.800" fill="#eef6fc" stroke="#2b78c2" stroke-width="1.200"/></svg>
<svg style="left:866px;top:782px" width="16" height="16" viewBox="0 0 16 16"><path d="M1.500 10.500h7v4h-7z" fill="#fff" stroke="#2a4a9a" stroke-width="1.200"/><path d="M9 .8l5 5.200h-2.800v7H6.800V6H4z" fill="#fbc11a" stroke="#d98a00" stroke-width=".9"/></svg>
<svg style="left:889px;top:782px" width="16" height="16" viewBox="0 0 16 16"><path d="M1 1.500h9v4H1z" fill="#fff" stroke="#2a4a9a" stroke-width="1.200"/><path d="M9 15.200l5-5.200h-2.800V3H6.800v7H4z" fill="#fbc11a" stroke="#d98a00" stroke-width=".9"/></svg>
<svg style="left:915px;top:785px" width="11" height="4"><use href="#mini"/></svg>
<svg style="left:939px;top:785px" width="10" height="10"><use href="#maxi"/></svg>
<div class="a" style="left:942px;top:806px;width:19px;height:200px;background:#fff;border:1px solid #d4d4d4"></div>
<div class="a" style="left:942px;top:806px;width:19px;height:19px;border:1px solid #d4d4d4"></div><svg style="left:947px;top:813px" width="9" height="5"><use href="#sbup"/></svg>
<div class="a" style="left:942px;top:824px;width:19px;height:30px;background:#dcdcdc;border:1px solid #bdbdbd"></div>
<div class="a" style="left:948px;top:834px;width:7px;height:1.500px;background:#555;box-shadow:0 3px 0 #555,0 6px 0 #555"></div>
<div class="a" style="left:942px;top:987px;width:19px;height:19px;border:1px solid #d4d4d4"></div><svg style="left:947px;top:994px" width="9" height="5"><use href="#sbdn"/></svg>
<div class="t" style="right:1109px;top:875.6px;font-size:13.300px">INVOIC_96A_AKH <span style="color:#957d47">[INV<span style="letter-spacing:0.283px">OIC D96A Ausgehend EAN008]</span></span></div>
<svg style="left:433px;top:900.5px" width="7" height="11"><use href="#chev"/></svg>
<svg style="left:447.500px;top:899.5px" width="15.500" height="11"><use href="#stk"/></svg>
<div class="t" style="letter-spacing:0.398px;left:469px;top:897.6px;font-size:13.300px">*postmapping</div><div class="t" style="letter-spacing:0.168px;left:560.300px;top:897.6px;font-size:13.300px;color:#957d47">[Postmapping]</div>
<svg style="left:433px;top:922.5px" width="7" height="11"><use href="#chev"/></svg>
<svg style="left:447.500px;top:921.5px" width="15.500" height="11"><use href="#stk"/></svg>
<div class="t" style="letter-spacing:0.130px;left:469px;top:919.6px;font-size:13.300px">OINVHT (001)</div><div class="t" style="letter-spacing:-0.033px;left:560.300px;top:919.6px;font-size:13.300px;color:#957d47">[Dateiwechsel]</div>
<svg style="left:433px;top:944.5px" width="7" height="11"><use href="#chev"/></svg>
<svg style="left:447.500px;top:943.5px" width="15.500" height="11"><use href="#stk"/></svg>
<div class="a" style="left:448px;top:953px;width:3px;height:3px;background:#1b3fa0"></div>
<div class="t" style="letter-spacing:0.130px;left:469px;top:941.6px;font-size:13.300px">OINVHT (002)</div><div class="t" style="letter-spacing:-0.094px;left:560.300px;top:941.6px;font-size:13.300px;color:#957d47">[UNB]</div>
<div class="a" style="left:446px;top:960px;width:154px;height:21px;background:#f0f0f0;border:1px solid #dadada"></div>
<svg style="left:433px;top:966.5px" width="7" height="11"><use href="#chev"/></svg>
<svg style="left:447.500px;top:965.5px" width="15.500" height="11"><use href="#stk"/></svg>
<div class="t" style="letter-spacing:0.130px;left:469px;top:963.6px;font-size:13.300px">OINVHT (003)</div><div class="t" style="letter-spacing:0.199px;left:560.300px;top:963.6px;font-size:13.300px;color:#000">[UNH]</div>
<svg style="left:433px;top:988.5px" width="7" height="11"><use href="#chev"/></svg>
<svg style="left:447.500px;top:987.5px" width="15.500" height="11"><use href="#stk"/></svg>
<div class="t" style="letter-spacing:0.130px;left:469px;top:985.6px;font-size:13.300px">OINVHT (004)</div><div class="t" style="letter-spacing:0.135px;left:560.300px;top:985.6px;font-size:13.300px;color:#957d47">[BGM DTM]</div>
<!-- SECTION: bottom2 -->
<div class="a" style="left:966px;top:778px;width:572px;height:228.500px;background:#fff;border-radius:4px;box-shadow:0 0 0 1px #eaeaea;"></div>
<div class="a" style="left:1069px;top:778px;width:469px;height:28px;background:#f0f0f0;border-radius:0 4px 0 0"></div>
<svg style="left:972px;top:785px" width="14" height="14" viewBox="0 0 14 14"><rect x=".5" y=".5" width="13" height="13" rx="1.500" fill="#f4f4f4" stroke="#555"/><path d="M7 1v12" stroke="#555"/><path d="M2.500 4h3M2.500 7h3M2.500 10h3" stroke="#333" stroke-width="1.300"/><path d="M8.500 4.500l1.200 1.200L11.500 3M8.500 9.500l1.200 1.200L11.500 8" fill="none" stroke="#666" stroke-width=".9"/></svg>
<div class="t" style="letter-spacing:-0.161px;left:991px;top:784.600px;font-size:13.300px">Variables</div>
<svg style="left:1051px;top:787px" width="11" height="11"><use href="#closex"/></svg>
<svg style="left:1074px;top:785px" width="15" height="15" viewBox="0 0 15 15"><rect x=".5" y=".5" width="14" height="14" rx="1.500" fill="#f4f0ea" stroke="#b9b0a4"/><circle cx="7.500" cy="7.500" r="3.300" fill="none" stroke="#f2b07a" stroke-width="1.800"/><path d="M7.500 2.300v10.400M2.300 7.500h10.400M3.800 3.800l7.400 7.400M11.200 3.800l-7.400 7.400" stroke="#f2b07a" stroke-width="1.200"/><circle cx="7.500" cy="7.500" r="1.600" fill="#f4f0ea"/></svg>
<div class="t" style="letter-spacing:0.106px;left:1094px;top:784.600px;font-size:13.300px;color:#8a8a8a">Subsystem Overview</div>
<svg style="left:1446px;top:784px" width="12" height="12" viewBox="0 0 12 12"><path d="M.8.800l10.400 10.400M11.200.8L.8 11.200" stroke="#7d7d7d" stroke-width="1.800"/></svg>
<svg style="left:1467px;top:782px" width="16" height="16" viewBox="0 0 16 16"><path d="M1 14.500L8 7.500" stroke="#e59a2a" stroke-width="2.200"/><circle cx="10.500" cy="5" r="3.800" fill="#eef6fc" stroke="#2b78c2" stroke-width="1.200"/></svg>
<svg style="left:1492px;top:785px" width="11" height="4"><use href="#mini"/></svg>
<svg style="left:1516px;top:785px" width="10" height="10"><use href="#maxi"/></svg>
<div class="a" style="left:971px;top:811px;width:563px;height:156px;border:1px solid #828790;background:#fff"></div>
<div class="a" style="left:973px;top:813px;width:204px;height:133px;background:#f8f8f8"></div>
<div class="a" style="left:973px;top:813px;width:540px;height:23px;border-bottom:1px solid #e5e5e5;background:linear-gradient(#fff,#fbfbfb)"></div>
<div class="a" style="left:1177px;top:813px;width:1px;height:133px;background:#ededed"></div><div class="a" style="left:1177px;top:813px;width:1px;height:22px;background:#e0e0e0"></div>
<div class="a" style="left:1286px;top:813px;width:1px;height:133px;background:#ededed"></div><div class="a" style="left:1286px;top:813px;width:1px;height:22px;background:#e0e0e0"></div>
<div class="a" style="left:1395px;top:813px;width:1px;height:133px;background:#ededed"></div><div class="a" style="left:1395px;top:813px;width:1px;height:22px;background:#e0e0e0"></div>
<div class="a" style="left:973px;top:858px;width:540px;height:1px;background:#f0f0f0"></div>
<div class="a" style="left:973px;top:881px;width:540px;height:1px;background:#f0f0f0"></div>
<div class="a" style="left:973px;top:904px;width:540px;height:1px;background:#f0f0f0"></div>
<div class="a" style="left:973px;top:927px;width:540px;height:1px;background:#f0f0f0"></div>
<div class="t" style="left:979px;top:817.6px;font-size:13.300px">Name</div>
<div class="t" style="letter-spacing:0.383px;left:1183px;top:817.6px;font-size:13.300px">Datatype</div>
<div class="t" style="letter-spacing:-0.006px;left:1292px;top:817.6px;font-size:13.300px">Value</div>
<div class="t" style="letter-spacing:0.171px;left:1401px;top:817.6px;font-size:13.300px">Description</div>
<svg style="left:1072px;top:817px" width="7" height="4" viewBox="0 0 7 4"><path d="M0 0h7L3.500 4z" fill="#111"/></svg>
<div class="a" style="left:973px;top:836px;width:540px;height:110px;overflow:hidden">
<div class="t" style="letter-spacing:-0.058px;left:6px;top:4.6px;font-size:13.300px">Dateiwechsel</div><div class="t" style="letter-spacing:0.347px;left:210px;top:4.6px;font-size:13.300px">string</div>
<div class="t" style="letter-spacing:-0.969px;left:6px;top:27.6px;font-size:13.300px">INTREF</div><div class="t" style="letter-spacing:0.347px;left:210px;top:27.6px;font-size:13.300px">string</div>
<div class="t" style="letter-spacing:0.062px;left:6px;top:50.6px;font-size:13.300px">OHTDOD</div><div class="t" style="letter-spacing:0.347px;left:210px;top:50.6px;font-size:13.300px">string</div>
<div class="t" style="letter-spacing:-0.218px;left:6px;top:73.6px;font-size:13.300px">OHTFOA</div><div class="t" style="letter-spacing:0.347px;left:210px;top:73.6px;font-size:13.300px">string</div>
<div class="t" style="letter-spacing:-0.865px;left:6px;top:96.6px;font-size:13.300px">OHTKEY</div><div class="t" style="letter-spacing:0.347px;left:210px;top:96.6px;font-size:13.300px">string</div>
</div>
<div class="a" style="left:1513px;top:813px;width:19px;height:133px;background:#fff;border:1px solid #d4d4d4"></div>
<div class="a" style="left:1513px;top:814px;width:19px;height:19px;border:1px solid #d4d4d4"></div><svg style="left:1518px;top:821px" width="9" height="5"><use href="#sbup"/></svg>
<div class="a" style="left:1513px;top:832px;width:19px;height:54px;background:#dcdcdc;border:1px solid #bdbdbd"></div>
<div class="a" style="left:1519px;top:854px;width:7px;height:1.500px;background:#555;box-shadow:0 3px 0 #555,0 6px 0 #555"></div>
<div class="a" style="left:1513px;top:927px;width:19px;height:19px;border:1px solid #d4d4d4"></div><svg style="left:1518px;top:934px" width="9" height="5"><use href="#sbdn"/></svg>
<div class="a" style="left:973px;top:946px;width:540px;height:19px;background:#fff;border:1px solid #d4d4d4"></div>
<div class="a" style="left:1513px;top:946px;width:19px;height:19px;background:#f0f0f0"></div>
<div class="a" style="left:973px;top:946px;width:19px;height:19px;border:1px solid #d4d4d4"></div><svg style="left:980px;top:951px" width="5" height="9" viewBox="0 0 5 9"><path d="M4.500.700L.8 4.500l3.700 3.800" fill="none" stroke="#606060" stroke-width="1.200"/></svg>
<div class="a" style="left:992px;top:946px;width:486px;height:19px;background:#dcdcdc;border:1px solid #bdbdbd"></div>
<div class="a" style="left:1231px;top:952px;width:1.500px;height:7px;background:#555;box-shadow:3px 0 0 #555,6px 0 0 #555"></div>
<div class="a" style="left:1494px;top:946px;width:19px;height:19px;border:1px solid #d4d4d4"></div><svg style="left:1501px;top:951px" width="5" height="9" viewBox="0 0 5 9"><path d="M.5.700L4.200 4.500.5 8.300" fill="none" stroke="#606060" stroke-width="1.200"/></svg>
<div class="a" style="left:972px;top:973px;width:78px;height:27px;background:#e1e1e1;border:1px solid #adadad;text-align:center;line-height:25px;font-size:13.300px">Add</div>
<div class="a" style="left:1057px;top:973px;width:78px;height:27px;background:#e1e1e1;border:1px solid #adadad;text-align:center;line-height:25px;font-size:13.300px">Edit</div>
<div class="a" style="left:1142px;top:973px;width:78px;height:27px;background:#e1e1e1;border:1px solid #adadad;text-align:center;line-height:25px;font-size:13.300px">Delete</div>
<!-- SECTION: bottom3 -->
<div class="a" style="left:1543.500px;top:778px;width:378px;height:228.500px;background:#fff;border-radius:4px 0 0 4px;box-shadow:0 0 0 1px #eaeaea;"></div>
<div class="a" style="left:1782px;top:778px;width:138px;height:28px;background:#ddecfb"></div>
<svg style="left:1551px;top:785px" width="14" height="14" viewBox="0 0 14 14"><path d="M0 0h7l3 3v10H0z" fill="#1e4e8c"/><path d="M7 0v3h3z" fill="#0e2e5c"/><path d="M2 3.500h4M2 5.500h6M2 7.500h6M2 9.500h6M2 11.500h6" stroke="#fff" stroke-width="1"/><path d="M12.500 0v13.500M10 6.500h2.500" stroke="#222" stroke-width="1" fill="none"/></svg>
<div class="t" style="letter-spacing:0.020px;left:1568px;top:784.600px;font-size:13.300px">EDIFACT Configuration (Target)</div>
<svg style="left:1764px;top:787px" width="11" height="11"><use href="#closex"/></svg>
<svg style="left:1874px;top:785px" width="11" height="4"><use href="#mini"/></svg>
<svg style="left:1898px;top:785px" width="10" height="10"><use href="#maxi"/></svg>
<div class="a" style="left:1549px;top:811px;width:366px;height:190px;border:1px solid #828790;background:#fff"></div>
<div class="a" style="left:1571px;top:813px;width:56px;height:22px;background:#f0f0f0;border:1px solid #dadada"></div>
<svg style="left:1573px;top:816px" width="16" height="16" viewBox="0 0 16 16"><rect x=".5" y=".5" width="15" height="15" rx="2" fill="#2a5fb0" stroke="#1e4a8c"/><path d="M3.500 12.500l5-5" stroke="#fff" stroke-width="2.200" stroke-linecap="round"/><path d="M12.800 4.200l-2 2-1.500-.4-.4-1.500 2-2c-1.600-.4-3.400.8-3.200 3 .2 1.800 2.200 2.700 3.800 2 1.300-.6 1.700-2 1.300-3.100z" fill="#fff"/></svg>
<div class="t" style="letter-spacing:0.052px;left:1594px;top:816.6px;font-size:13.300px">Data</div>
<svg style="left:1573px;top:839px" width="16" height="14" viewBox="0 0 16 14"><rect x="2.500" y="1.500" width="13" height="12" fill="#e2eefa" stroke="#2f5288"/><rect x="2.500" y="1.500" width="13" height="3" fill="#2f5288"/><path d="M4.500 6.500h9M4.500 8.500h9M4.500 10.500h9" stroke="#2f5288" stroke-width="1"/><path d="M2.500 0l1 1.800L5.500 2.500 3.500 3.500 2.500 5.500 1.500 3.500 0 2.500l1.500-.7z" fill="#ffe27a" stroke="#c99a1a" stroke-width=".6"/></svg><div class="t" style="left:1594px;top:838.6px;font-size:13.300px">S3</div>
<svg style="left:1573px;top:861px" width="16" height="14" viewBox="0 0 16 14"><rect x="2.500" y="1.500" width="13" height="12" fill="#e2eefa" stroke="#2f5288"/><rect x="2.500" y="1.500" width="13" height="3" fill="#2f5288"/><path d="M4.500 6.500h9M4.500 8.500h9M4.500 10.500h9" stroke="#2f5288" stroke-width="1"/><path d="M2.500 0l1 1.800L5.500 2.500 3.500 3.500 2.500 5.500 1.500 3.500 0 2.500l1.500-.7z" fill="#ffe27a" stroke="#c99a1a" stroke-width=".6"/></svg><div class="t" style="letter-spacing:0.125px;left:1594px;top:860.6px;font-size:13.300px">INVOIC [EAN008]</div>
<!-- SECTION: status -->
<div class="a" id="status"><div class="a" style="left:1564px;top:6px;width:1px;height:16px;background:repeating-linear-gradient(180deg,#a09c8c 0 2px,transparent 2px 4px)"></div></div>
<!-- SECTION: dialog -->
<div class="a" style="left:16px;top:292px;width:600px;height:600px;background:#5b636a;border:1px solid #3f464c"></div>
<div class="a" style="left:25px;top:327px;width:583px;height:556px;background:#f0f0f0"></div>
<div class="a" style="left:25px;top:327px;width:583px;height:78px;background:#fff"></div>
<svg style="left:25px;top:327px" width="583" height="78" viewBox="0 0 583 78"><defs><linearGradient id="sw1" x1="0" x2="1"><stop offset="0" stop-color="#e4e9fa" stop-opacity="0"/><stop offset="1" stop-color="#dfe5f8"/></linearGradient></defs><path d="M583 2c-28 6-58 32-76 64h76z" fill="url(#sw1)" opacity=".7"/><path d="M583 22c-35 4-75 20-100 44h100z" fill="url(#sw1)"/></svg>
<svg style="left:34px;top:300px" width="18" height="18" viewBox="0 0 18 18"><circle cx="9" cy="9" r="8.700" fill="#fbfbfb"/><path d="M4.200 11.800c1.500 2.600 5.500 3 8 .6 2.200-2.200 2-5.200.6-6.600.6 2-.3 4.300-2.200 5.600-2 1.300-4.600 1.400-6.400.4z" fill="#c5241c"/><path d="M4 11.200l4.600-3.400-.2 1 3-2.200-3.600 4 .3-1.200z" fill="#f39a1e"/></svg>
<div class="a" style="left:570px;top:293px;width:38px;height:34px;background:#c75c53"></div>
<svg style="left:584.500px;top:304.500px" width="10" height="9" viewBox="0 0 10 9"><path d="M1 .8l8 7.400M9 .8L1 8.200" stroke="#000" stroke-width="2.400"/></svg>
<div class="t" style="letter-spacing:0.110px;left:33px;top:339px;font-size:14.300px;font-weight:bold">EDIFACT - Data</div>
<div class="t" style="letter-spacing:0.369px;left:42px;top:369.6px;font-size:13.300px">Configure the target module</div>
<div class="a" style="left:30px;top:410px;width:572px;height:1px;background:#a0a0a0"></div><div class="a" style="left:30px;top:411px;width:572px;height:1px;background:#fff"></div>
<div class="a" style="left:583px;top:417px;width:19px;height:398px;background:#fff;border:1px solid #cfcfcf"></div>
<div class="a" style="left:583px;top:417px;width:19px;height:19px;border:1px solid #cfcfcf"></div><svg style="left:588px;top:424px" width="9" height="5"><use href="#sbup"/></svg>
<div class="a" style="left:583px;top:796px;width:19px;height:19px;border:1px solid #cfcfcf"></div><svg style="left:588px;top:803px" width="9" height="5"><use href="#sbdn"/></svg>
<div class="t" style="letter-spacing:0.016px;left:35px;top:429.1px;font-size:13.300px">Service directory:</div>
<div class="a" style="left:183px;top:422px;width:46px;height:27px;background:#fff;border:1px solid #7a7a7a"></div><div class="t" style="letter-spacing:-1.133px;left:187.5px;top:428.6px;font-size:13.300px">S3</div><svg style="left:216px;top:433.5px" width="8" height="5" viewBox="0 0 8 5"><path d="M.7.700L4 4 7.300.7" fill="none" stroke="#3c3c3c" stroke-width="1.900"/></svg>
<div class="t" style="letter-spacing:0.029px;left:35px;top:459.6px;font-size:13.300px">UNA service characters:</div>
<div class="a" style="left:183px;top:454px;width:379px;height:25px;background:#fff;border:1px solid #7a7a7a"></div>
<div class="t" style="left:190px;top:458.6px;font-size:13.300px;color:#b4b4b4">:+.? '</div>
<svg style="left:565.5px;top:461.5px" width="10" height="10" viewBox="0 0 10 10"><path d="M.6.600L9.4 9.4M9.4 .6L.6 9.4" stroke="#555" stroke-width="1.3"/></svg>
<div class="t" style="letter-spacing:0.130px;left:35px;top:490.6px;font-size:13.300px">Empty file log level:</div>
<div class="a" style="left:183px;top:484px;width:79px;height:27px;background:#fff;border:1px solid #7a7a7a"></div><div class="t" style="letter-spacing:0.036px;left:187.5px;top:490.6px;font-size:13.300px">*OK</div><svg style="left:249px;top:495.5px" width="8" height="5" viewBox="0 0 8 5"><path d="M.7.700L4 4 7.300.7" fill="none" stroke="#3c3c3c" stroke-width="1.900"/></svg>
<div class="a" style="left:35px;top:516px;width:543px;height:1px;background:#a0a0a0"></div><div class="a" style="left:35px;top:517px;width:543px;height:1px;background:#fff"></div>
<div class="t" style="letter-spacing:-0.463px;left:35px;top:528.6px;font-size:13.300px">CCSID:</div>
<div class="a" style="left:183px;top:523px;width:62px;height:25px;background:#fff;border:1px solid #7a7a7a"></div>
<div class="t" style="letter-spacing:0.352px;left:190.500px;top:528.1px;font-size:13.300px">1252</div>
<svg style="left:247px;top:529.5px" width="12" height="12" viewBox="0 0 12 12"><path d="M.6.600L11.4 11.4M11.4 .6L.6 11.4" stroke="#cc1414" stroke-width="2.200"/></svg>
<div class="t" style="letter-spacing:0.035px;left:35px;top:559.6px;font-size:13.300px">Character set:</div>
<div class="a" style="left:183px;top:553px;width:72px;height:27px;background:#fff;border:1px solid #7a7a7a"></div><div class="t" style="letter-spacing:0.086px;left:187.5px;top:559.6px;font-size:13.300px">UNOC</div><svg style="left:242px;top:564.5px" width="8" height="5" viewBox="0 0 8 5"><path d="M.7.700L4 4 7.300.7" fill="none" stroke="#3c3c3c" stroke-width="1.900"/></svg>
<div class="a" style="left:35px;top:585px;width:543px;height:1px;background:#a0a0a0"></div><div class="a" style="left:35px;top:586px;width:543px;height:1px;background:#fff"></div>
<div class="t" style="letter-spacing:0.423px;left:35px;top:597.6px;font-size:13.300px">Number format:</div>
<div class="a" style="left:183px;top:592px;width:379px;height:25px;background:#fff;border:1px solid #7a7a7a"></div>
<div class="t" style="left:190px;top:597.1px;font-size:13.300px;color:#b4b4b4">0.##</div>
<svg style="left:565.5px;top:599.5px" width="10" height="10" viewBox="0 0 10 10"><path d="M.6.600L9.4 9.4M9.4 .6L.6 9.4" stroke="#555" stroke-width="1.3"/></svg>
<div class="t" style="letter-spacing:0.093px;left:35px;top:624.6px;font-size:13.300px">Character replacement:</div>
<div class="a" style="left:183px;top:626px;width:13px;height:13px;background:#fff;border:1px solid #333"></div><svg style="left:185px;top:628.5px" width="9" height="8" viewBox="0 0 9 8"><path d="M.8 4l2.500 2.700L8.300.8" fill="none" stroke="#111" stroke-width="1.700"/></svg>
<div class="t" style="letter-spacing:0.103px;left:200px;top:624.6px;font-size:13.300px">Use default</div>
<div class="t" style="letter-spacing:-0.039px;left:35px;top:648.6px;font-size:13.300px">Characters:</div>
<div class="a" style="left:183px;top:646px;width:395px;height:19px;background:#f0f0f0;border:1px solid #c9c9c9"></div>
<div class="t" style="letter-spacing:0.371px;left:190.500px;top:648px;font-family:'Liberation Mono',monospace;font-size:12.500px;color:#6d6d6d">ÄÖÜß</div>
<div class="t" style="letter-spacing:-0.108px;left:35px;top:672.6px;font-size:13.300px">Replacements:</div>
<div class="a" style="left:183px;top:670px;width:395px;height:19px;background:#f0f0f0;border:1px solid #c9c9c9"></div>
<div class="t" style="letter-spacing:0.371px;left:190.500px;top:672px;font-family:'Liberation Mono',monospace;font-size:12.500px;color:#6d6d6d">AOUS</div>
<div class="a" style="left:35px;top:694px;width:543px;height:1px;background:#a0a0a0"></div><div class="a" style="left:35px;top:695px;width:543px;height:1px;background:#fff"></div>
<div class="t" style="letter-spacing:0.000px;left:35px;top:703.6px;font-size:13.300px">Newline:</div>
<div class="a" style="left:183px;top:704px;width:13px;height:13px;background:#fff;border:1px solid #333"></div>
<div class="t" style="letter-spacing:0.190px;left:200px;top:703.6px;font-size:13.300px">Insert newline</div>
<div class="t" style="letter-spacing:0.132px;left:35px;top:727.6px;font-size:13.300px">UNH value:</div>
<div class="a" style="left:183px;top:728px;width:13px;height:13px;background:#fff;border:1px solid #333"></div>
<div class="t" style="letter-spacing:0.134px;left:200px;top:727.6px;font-size:13.300px">Fill automatically</div>
<svg style="left:43px;top:839px" width="22" height="22" viewBox="0 0 22 22"><circle cx="11" cy="11" r="9.300" fill="#f2f4f8" stroke="#53648a" stroke-width="1.200"/></svg>
<div class="t" style="left:43px;width:22px;text-align:center;top:842px;font-size:15px;font-weight:bold;color:#53648a">?</div>
<div class="a" style="left:472px;top:838px;width:120px;height:27px;background:#e1e1e1;border:1px solid #3a7cba;outline:1px solid #e1e1e1;outline-offset:-2px"></div><div class="t" style="left:472px;width:120px;text-align:center;top:844px;font-size:14px">OK</div>
<!-- SECTION: annotation -->
<svg style="left:0;top:0" width="1920" height="1033" viewBox="0 0 1920 1033" fill="none" stroke="#c1513a" stroke-linecap="round" stroke-linejoin="round">
<rect x="944.500" y="218.500" width="570" height="306" rx="29" stroke-width="4.200"/>
<rect x="28" y="721" width="286" height="26" rx="13" stroke-width="3"/>
<path d="M314 733.500L936 499.500" stroke-width="5.500"/>
<path d="M906 496L942 498L916 522" stroke-width="6" stroke-linecap="square" stroke-linejoin="miter"/>
</svg>
</body>
</html>
